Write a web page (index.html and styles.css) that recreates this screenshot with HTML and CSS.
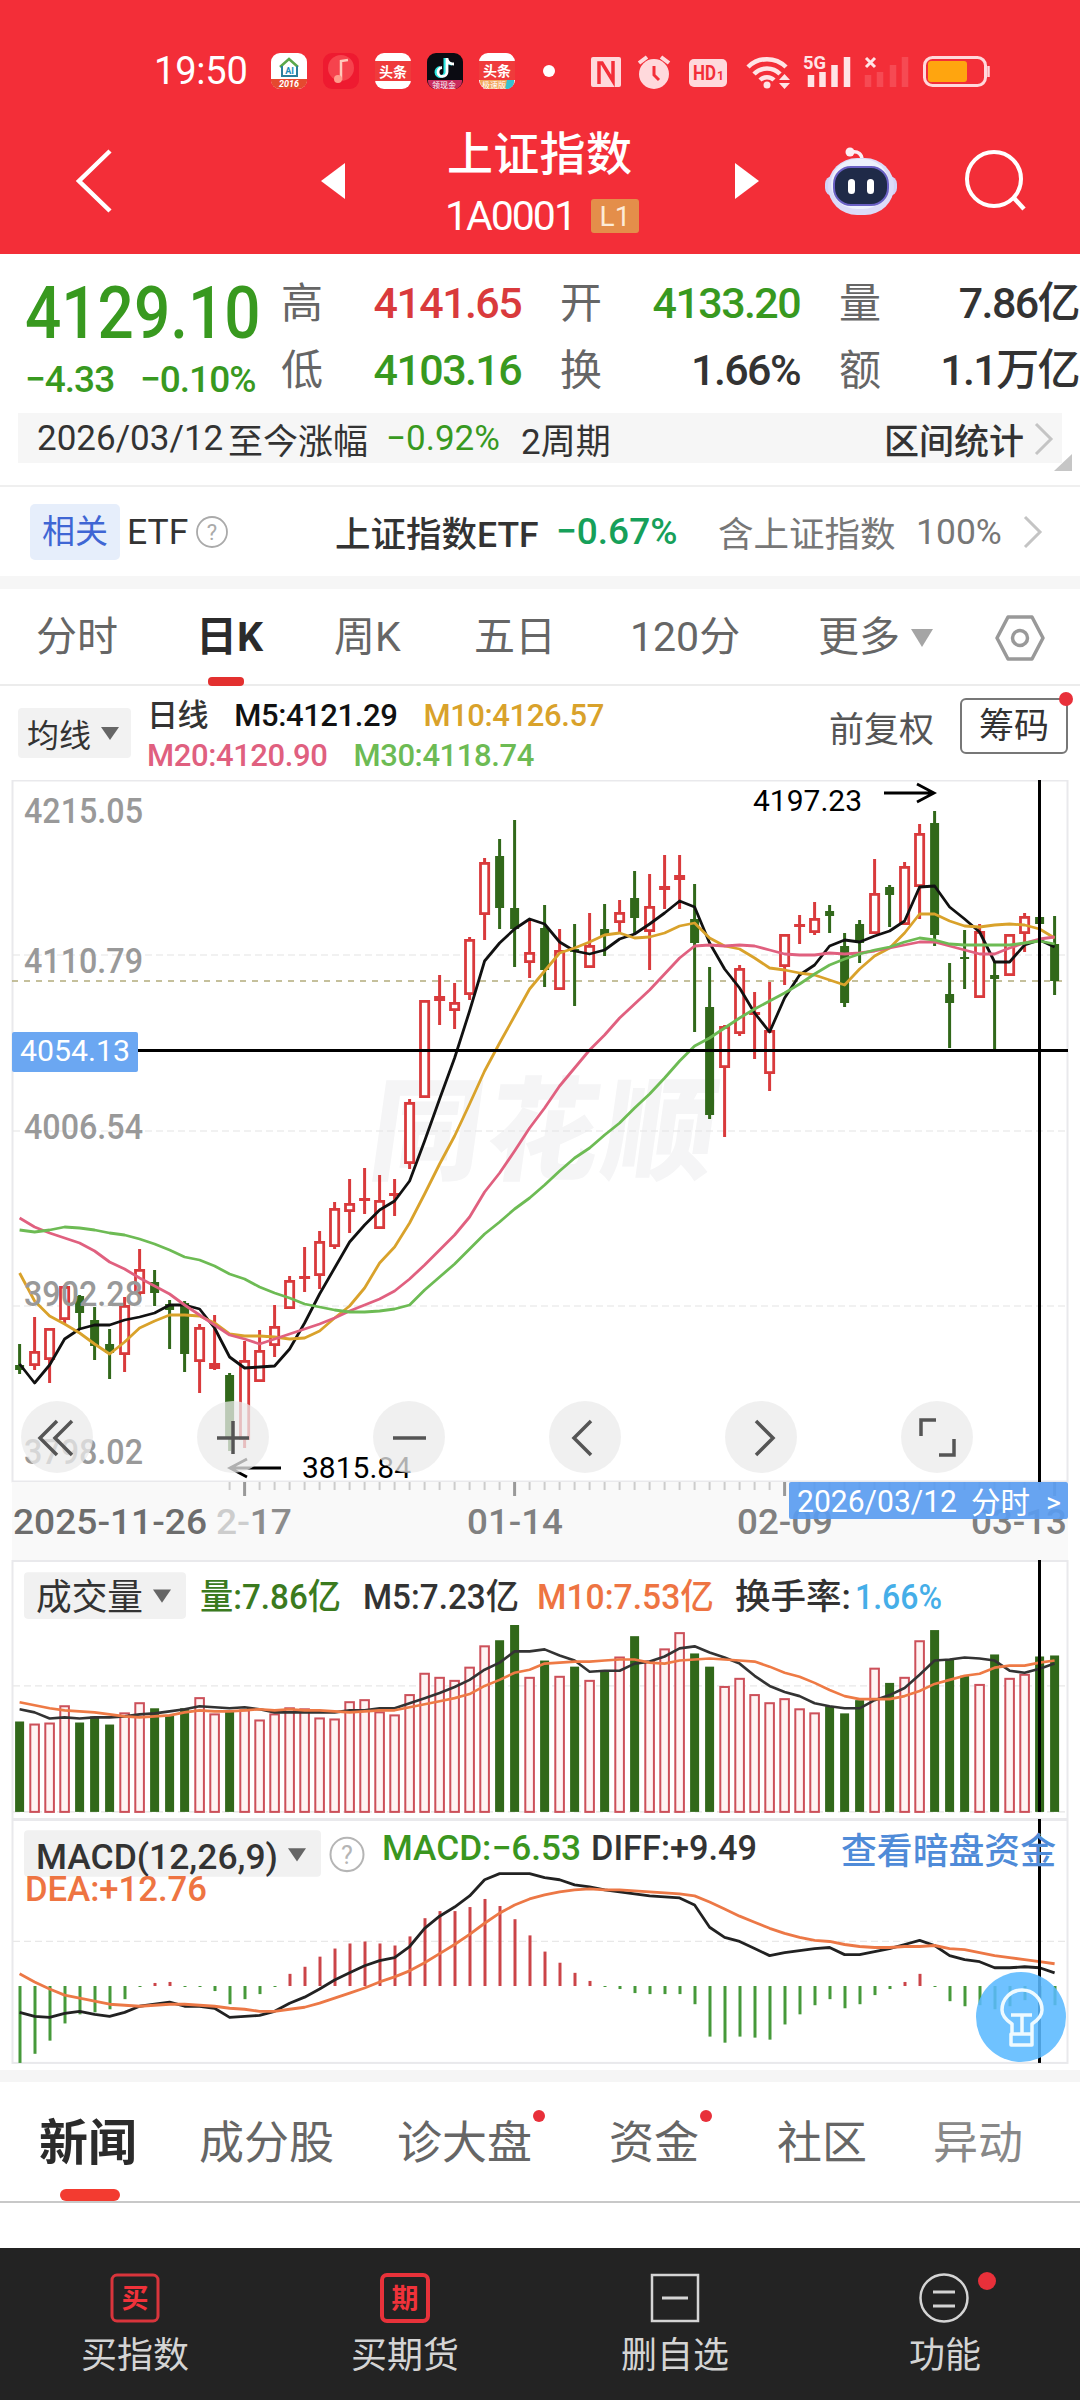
FILE: index.html
```html
<!DOCTYPE html>
<html lang="zh-CN">
<head>
    <meta charset="UTF-8">
    <meta name="viewport" content="width=device-width, initial-scale=1.0">
    <title>上证指数</title>
    <link rel="stylesheet" href="styles.css">
</head>
<body>
    <header class="top">
        <div class="status">
            <span class="time">19:50</span>
            <div class="apps">
                <svg width="36" height="36" viewBox="0 0 36 36">
                    <rect width="36" height="36" rx="9" fill="#fff"/>
                    <path d="M0 26h36a9 9 0 0 1-9 10H9A9 9 0 0 1 0 26z" fill="#e5492f"/>
                    <path d="M9 14l9-8 9 8" fill="none" stroke="#5aa84a" stroke-width="2.500"/>
                    <path d="M11 13v10h15V13" fill="none" stroke="#2a7f9c" stroke-width="2"/>
                    <text x="18.500" y="21" font-size="9" font-weight="700" fill="#1b8ab8" text-anchor="middle">AI</text>
                    <text x="18" y="34" font-size="9" font-weight="700" font-style="italic" fill="#fff" text-anchor="middle">2016</text>
                </svg>
                <svg width="36" height="36" viewBox="0 0 36 36">
                    <rect width="36" height="36" rx="9" fill="#ee1a30"/>
                    <circle cx="18" cy="15" r="13" fill="#f6434d"/>
                    <path d="M18 27V8l7-1" fill="none" stroke="#ffc9bb" stroke-width="2.500"/>
                    <circle cx="15" cy="26" r="4" fill="#ff9c8c"/>
                </svg>
                <svg width="36" height="36" viewBox="0 0 36 36">
                    <rect width="36" height="36" rx="9" fill="#fff"/>
                    <rect y="8" width="36" height="20" fill="#ef3b3b"/>
                    <text x="18" y="24" font-size="14" font-weight="700" fill="#fff" text-anchor="middle">头条</text>
                </svg>
                <svg width="36" height="36" viewBox="0 0 36 36">
                    <rect width="36" height="36" rx="9" fill="#0b0b12"/>
                    <path d="M18 5v14a4.500 4.500 0 1 1-5-4.500M18 6c1 4 3 5 7 5" fill="none" stroke="#27e5e0" stroke-width="3"/>
                    <path d="M20 5v14a4.500 4.500 0 1 1-5-4.500M20 6c1 4 3 5 7 5" fill="none" stroke="#fff" stroke-width="2.800"/>
                    <path d="M1 27h34a8 8 0 0 1-8 9H9a8 8 0 0 1-8-9z" fill="#c82a5c"/>
                    <text x="17" y="35" font-size="8" fill="#fff" text-anchor="middle">领现金</text>
                </svg>
                <svg width="36" height="36" viewBox="0 0 36 36">
                    <rect width="36" height="36" rx="9" fill="#fff"/>
                    <rect y="8" width="36" height="19" fill="#ef3b3b"/>
                    <path d="M1 27h34a8 8 0 0 1-8 9H9a8 8 0 0 1-8-9z" fill="#f2a65a"/>
                    <path d="M28 27h7a8 8 0 0 1-9 9z" fill="#35c2d0"/>
                    <text x="18" y="23" font-size="14" font-weight="700" fill="#fff" text-anchor="middle">头条</text>
                    <text x="15" y="35" font-size="8" fill="#fff" text-anchor="middle">极速版</text>
                </svg>
            </div>
            <i class="more-dot"></i>
            <svg class="sys" width="400" height="40" viewBox="590 50 400 40">
                <rect x="591" y="56" width="30" height="30" rx="2" fill="#ffd9dc"/>
                <path d="M599 83V62h3l11 18V60" fill="none" stroke="#f32e38" stroke-width="3.500"/>
                <circle cx="654" cy="73" r="15" fill="#ffd9dc"/>
                <path d="M639 62l8-6M669 62l-8-6" stroke="#ffd9dc" stroke-width="4"/>
                <path d="M654 65v9l5 5" fill="none" stroke="#f32e38" stroke-width="3"/>
                <rect x="689" y="58" width="38" height="28" rx="5" fill="#ffd9dc"/>
                <text x="693" y="79" font-size="20" font-weight="700" fill="#f32e38" textLength="23" lengthAdjust="spacingAndGlyphs">HD</text>
                <text x="717" y="79" font-size="12" font-weight="700" fill="#f32e38">1</text>
                <g fill="none" stroke="#ffe4e6" stroke-width="4.500">
                    <path d="M748 66a27 27 0 0 1 38 0"/>
                    <path d="M754 73a18 18 0 0 1 26 0"/>
                    <path d="M760 79a10 10 0 0 1 14 0"/>
                </g>
                <circle cx="767" cy="84" r="3.500" fill="#ffe4e6"/>
                <path d="M779 79l5.500-6 5.500 6zM779 82l5.500 6 5.500-6z" fill="#ffe4e6"/>
                <text x="803" y="68" font-size="19" font-weight="700" fill="#ffe4e6" textLength="23" lengthAdjust="spacingAndGlyphs">5G</text>
                <path d="M811 86V74M822.500 86V71M834.500 86V64M847 86V56" stroke="#ffe4e6" stroke-width="6.500"/>
                <path d="M866 57l9 9M875 57l-9 9" stroke="#ffe4e6" stroke-width="3"/>
                <path d="M868 86V74M880 86V71M893 86V64M905 86V56" stroke="#f64a53" stroke-width="6.500"/>
                <rect x="924.500" y="56.500" width="61" height="28" rx="8" fill="none" stroke="#ffd9dc" stroke-width="3"/>
                <rect x="928" y="60" width="39" height="21" rx="3" fill="#ffa50f"/>
                <path d="M988.500 65v11" stroke="#ffd9dc" stroke-width="2.500"/>
            </svg>
        </div>
        <div class="nav">
            <svg class="back" width="40" height="68" viewBox="0 0 40 68"><path d="M35 4L4 34l31 30" fill="none" stroke="#fff" stroke-width="4.500"/></svg>
            <svg class="prev" width="25" height="36" viewBox="0 0 25 36"><path d="M0 18L24 0v36z" fill="#fff"/></svg>
            <div class="title">
                <h1>上证指数</h1>
                <p><span class="code">1A0001</span><span class="level">L1</span></p>
            </div>
            <svg class="next" width="25" height="36" viewBox="0 0 25 36"><path d="M24 18L0 0v36z" fill="#fff"/></svg>
            <svg class="robot" width="74" height="70" viewBox="0 0 74 70">
                <path d="M38 14c0-6-4-9-10-8" fill="none" stroke="#fbeef6" stroke-width="3.500"/>
                <circle cx="26" cy="6" r="4.500" fill="#fdeff5"/>
                <rect x="1" y="30" width="72" height="20" rx="8" fill="#d3d2f6"/>
                <rect x="4" y="12" width="66" height="57" rx="29" fill="#dcdbf8"/>
                <rect x="7" y="13" width="58" height="50" rx="26" fill="#edf0fc"/>
                <rect x="10" y="21" width="54" height="38" rx="17" fill="#1f2a48" stroke="#6a60c4" stroke-width="2"/>
                <rect x="24" y="33" width="7" height="15" rx="3.500" fill="#fff"/>
                <rect x="43" y="33" width="7" height="15" rx="3.500" fill="#fff"/>
            </svg>
            <svg class="search" width="64" height="64" viewBox="0 0 64 64"><circle cx="29" cy="30" r="27" fill="none" stroke="#fff" stroke-width="4"/><path d="M48 48l11 12" stroke="#fff" stroke-width="4.500"/></svg>
        </div>
    </header>

    <section class="quote">
        <div class="last">
            <span class="price">4129.10</span>
            <p class="change"><span>−4.33</span><span>−0.10%</span></p>
        </div>
        <dl class="stats">
            <dt>高</dt><dd class="up">4141.65</dd>
            <dt>开</dt><dd class="down">4133.20</dd>
            <dt>量</dt><dd>7.86亿</dd>
            <dt>低</dt><dd class="down">4103.16</dd>
            <dt>换</dt><dd>1.66%</dd>
            <dt>额</dt><dd>1.1万亿</dd>
        </dl>
    </section>

    <div class="range">
        <span>2026/03/12</span>
        <span>至今涨幅</span>
        <span class="down">−0.92%</span>
        <span>2周期</span>
        <span class="strong">区间统计</span>
        <svg width="20" height="34" viewBox="0 0 20 34"><path d="M2 2l15 15L2 32" fill="none" stroke="#c4c4c4" stroke-width="3"/></svg>
        <i class="corner"></i>
    </div>

    <div class="etf">
        <span class="tag">相关</span>
        <span class="dark">ETF</span>
        <svg width="34" height="34" viewBox="0 0 34 34"><circle cx="17" cy="17" r="15" fill="none" stroke="#aaa" stroke-width="1.800"/><text x="17" y="25" font-size="22" fill="#aaa" text-anchor="middle">?</text></svg>
        <span class="dark strong">上证指数ETF</span>
        <span class="pct">−0.67%</span>
        <span>含上证指数</span>
        <span>100%</span>
        <svg width="20" height="34" viewBox="0 0 20 34"><path d="M2 2l15 15L2 32" fill="none" stroke="#c4c4c4" stroke-width="3"/></svg>
    </div>

    <nav class="periods">
        <a>分时</a>
        <a class="active">日K</a>
        <a>周K</a>
        <a>五日</a>
        <a>120分</a>
        <a>更多</a>
        <i class="caret big"></i>
        <svg width="50" height="48" viewBox="0 0 50 48"><path d="M13 3h24l11 21-11 21H13L2 24z" fill="none" stroke="#999" stroke-width="3.500" stroke-linejoin="round"/><circle cx="25" cy="24" r="7.500" fill="none" stroke="#999" stroke-width="3.500"/></svg>
    </nav>

    <div class="indicators">
        <div class="select">均线<i class="caret"></i></div>
        <div class="ma">
            <p><span>日线</span><span class="m5">M5:4121.29</span><span class="m10">M10:4126.57</span></p>
            <p><span class="m20">M20:4120.90</span><span class="m30">M30:4118.74</span></p>
        </div>
        <span class="adjust">前复权</span>
        <div class="chips">筹码<i class="badge"></i></div>
    </div>

    <main class="charts">
        <svg id="kline" width="1080" height="780" viewBox="0 779 1080 780"></svg>
        <div class="tools">
            <button><svg viewBox="0 0 72 72"><path d="M36 20L19 37l17 17M51 20L34 37l17 17"/></svg></button>
            <button><svg viewBox="0 0 72 72"><path d="M36 20v33M20 37h32"/></svg></button>
            <button><svg viewBox="0 0 72 72"><path d="M20 37h33"/></svg></button>
            <button><svg viewBox="0 0 72 72"><path d="M42 20L25 37l17 17"/></svg></button>
            <button><svg viewBox="0 0 72 72"><path d="M31 20l17 17-17 17"/></svg></button>
            <button><svg viewBox="0 0 72 72"><path d="M20 35V19h15M53 38v16H38"/></svg></button>
        </div>
        <svg id="volume" width="1080" height="259" viewBox="0 1559 1080 255" preserveAspectRatio="none"></svg>
        <svg id="macd" width="1080" height="251" viewBox="0 1814 1080 248" preserveAspectRatio="none"></svg>
        <div class="hint">
            <svg width="90" height="90" viewBox="0 0 90 90"><path d="M36 57v-5c-6-4-10-8-10-14a20 20 0 0 1 40 0c0 6-4 10-10 14v5M35 43h21M46 43v18M35 62h21v11H35zM36 56v6M56 56v6" fill="none" stroke="#eefaff" stroke-width="3.500" stroke-linejoin="round"/></svg>
        </div>
    </main>

    <nav class="topics">
        <a class="active">新闻</a>
        <a>成分股</a>
        <a>诊大盘<i class="badge"></i></a>
        <a>资金<i class="badge"></i></a>
        <a>社区</a>
        <a class="faded">异动</a>
    </nav>

    <footer class="actions">
        <a>
            <svg width="50" height="50" viewBox="0 0 50 50"><rect x="2" y="2" width="46" height="46" rx="5" fill="none" stroke="#d9353c" stroke-width="3"/><text x="25" y="35" font-size="27" font-weight="700" fill="#f0323a" text-anchor="middle">买</text></svg>
            买指数
        </a>
        <a>
            <svg width="50" height="50" viewBox="0 0 50 50"><rect x="2" y="2" width="46" height="46" rx="5" fill="none" stroke="#e8323a" stroke-width="4"/><text x="25" y="35" font-size="27" font-weight="700" fill="#f0323a" text-anchor="middle">期</text></svg>
            买期货
        </a>
        <a>
            <svg width="50" height="50" viewBox="0 0 50 50"><rect x="2" y="2" width="46" height="46" fill="none" stroke="#d4d4d4" stroke-width="2.500"/><path d="M12 25h26" stroke="#d4d4d4" stroke-width="3"/></svg>
            删自选
        </a>
        <a>
            <svg width="52" height="50" viewBox="0 0 52 50"><circle cx="25" cy="25" r="23.500" fill="none" stroke="#d4d4d4" stroke-width="2.500"/><path d="M14 19h22M14 33h22" stroke="#d4d4d4" stroke-width="3"/></svg>
            功能
            <i class="badge"></i>
        </a>
    </footer>

    <script>
        // One row per day: body top, body bottom, high, low, u(p) or d(own)
        const candles = [
            [1364,1369,1343,1373,"d"],[1350,1365,1316,1369,"u"],[1327,1359,1327,1382,"u"],[1285,1319,1284,1323,"u"],[1295,1312,1294,1327,"d"],
            [1319,1345,1306,1359,"d"],[1343,1352,1328,1378,"d"],[1304,1354,1296,1371,"u"],[1268,1293,1248,1300,"u"],[1281,1292,1269,1305,"d"],
            [1303,1309,1299,1348,"d"],[1302,1353,1300,1371,"d"],[1326,1361,1323,1392,"u"],[1362,1368,1314,1369,"u"],[1374,1437,1372,1450,"d"],
            [1359,1439,1340,1447,"u"],[1349,1381,1329,1381,"u"],[1325,1345,1304,1356,"u"],[1279,1308,1275,1308,"u"],[1275,1278,1246,1291,"u"],
            [1240,1275,1230,1288,"u"],[1207,1246,1201,1248,"u"],[1202,1211,1178,1232,"u"],[1197,1200,1167,1213,"u"],[1199,1228,1174,1228,"u"],
            [1192,1195,1178,1215,"u"],[1101,1163,1098,1168,"u"],[999,1097,999,1097,"u"],[995,1000,974,1024,"u"],[1001,1010,982,1028,"u"],
            [938,994,936,999,"u"],[861,914,857,939,"u"],[855,907,838,928,"d"],[907,928,819,966,"d"],[951,962,920,977,"u"],
            [927,969,904,986,"d"],[949,989,928,989,"u"],[948,951,923,1005,"d"],[944,967,912,967,"u"],[928,935,903,955,"d"],
            [911,922,899,932,"u"],[897,917,870,933,"d"],[905,931,873,969,"u"],[885,889,854,908,"u"],[874,879,854,908,"u"],
            [918,942,883,1031,"d"],[1006,1114,966,1118,"d"],[1025,1067,1024,1136,"u"],[967,1033,964,1035,"u"],[1011,1014,991,1058,"u"],
            [1029,1073,981,1090,"u"],[933,966,933,984,"u"],[923,926,914,943,"u"],[917,932,901,934,"u"],[910,915,904,932,"d"],
            [945,1002,932,1006,"d"],[923,942,919,962,"d"],[892,933,858,933,"u"],[886,894,884,926,"d"],[865,924,861,924,"u"],
            [832,886,823,918,"u"],[822,934,810,945,"d"],[993,1002,962,1047,"d"],[956,958,929,988,"d"],[930,997,923,997,"u"],
            [974,978,960,1051,"d"],[933,975,933,975,"u"],[915,933,912,951,"u"],[916,923,916,923,"d"],[943,980,915,994,"d"]
        ];
        const ma5 = [1363,1382,1364,1338,1328,1324,1324,1319,1316,1312,1304,1304,1308,1327,1356,1367,1366,1365,1348,1322,1293,1267,1241,1224,1209,1200,1180,1140,1098,1057,1010,960,942,928,918,923,941,950,953,949,938,933,923,912,900,906,942,968,987,1012,1031,997,974,964,945,939,941,935,930,920,886,885,906,918,931,961,961,944,939,946];
        const ma10 = [1272,1300,1315,1323,1332,1343,1353,1341,1327,1320,1314,1314,1315,1322,1333,1335,1335,1336,1338,1337,1330,1317,1305,1287,1262,1246,1222,1193,1163,1135,1103,1070,1042,1015,988,970,952,947,941,934,932,937,936,932,925,922,937,945,948,957,967,969,972,974,979,984,968,955,947,932,913,913,920,925,926,924,923,924,928,937];
        const ma20 = [1217,1226,1232,1237,1242,1250,1261,1268,1277,1285,1293,1304,1314,1324,1334,1338,1343,1338,1333,1328,1323,1317,1310,1304,1298,1290,1278,1264,1249,1234,1216,1191,1172,1150,1127,1107,1085,1067,1049,1034,1017,1003,989,973,957,945,944,945,944,945,949,953,954,954,952,953,952,950,947,944,941,941,945,949,953,953,947,942,938,936];
        const ma30 = [1229,1231,1229,1226,1227,1229,1232,1234,1238,1243,1249,1256,1259,1265,1273,1278,1286,1292,1297,1303,1306,1309,1311,1311,1310,1308,1304,1289,1276,1263,1248,1233,1221,1208,1197,1184,1170,1157,1147,1134,1122,1107,1093,1077,1060,1045,1037,1027,1017,1008,1000,992,983,973,964,958,953,949,946,941,937,939,943,944,944,944,944,942,940,943];
        const vol = [1718,1720,1719,1702,1719,1713,1721,1709,1699,1705,1712,1705,1694,1710,1708,1706,1716,1710,1704,1705,1714,1715,1698,1696,1708,1711,1691,1670,1674,1677,1664,1643,1638,1623,1674,1658,1673,1664,1677,1668,1654,1634,1658,1646,1630,1651,1664,1683,1675,1691,1699,1695,1705,1709,1703,1710,1697,1665,1680,1674,1638,1628,1657,1673,1681,1652,1675,1671,1654,1653];
        const vol5 = [1706,1709,1715,1714,1715,1714,1714,1713,1711,1710,1708,1706,1703,1704,1705,1704,1706,1709,1709,1709,1709,1709,1707,1707,1705,1705,1700,1695,1690,1684,1677,1667,1660,1649,1649,1647,1653,1658,1669,1668,1668,1661,1659,1654,1646,1644,1650,1655,1661,1673,1683,1689,1693,1700,1703,1705,1705,1697,1692,1685,1672,1658,1657,1655,1656,1658,1668,1670,1666,1661];
        const vol10 = [1699,1702,1705,1707,1708,1709,1711,1713,1714,1713,1712,1709,1707,1708,1708,1707,1706,1707,1706,1707,1707,1708,1709,1708,1707,1707,1704,1701,1698,1695,1691,1683,1677,1670,1667,1661,1660,1659,1659,1658,1657,1657,1660,1661,1658,1657,1656,1657,1658,1659,1664,1670,1674,1680,1687,1693,1696,1696,1696,1693,1688,1681,1677,1673,1671,1665,1663,1663,1660,1658];
        const bars = [2055,2046,2033,2016,2007,2005,2002,1992,1980,1976,1975,1980,1980,1984,1997,1992,1987,1980,1967,1960,1950,1942,1937,1935,1937,1939,1930,1912,1905,1905,1901,1893,1900,1913,1929,1945,1956,1966,1974,1980,1982,1986,1987,1987,1987,1997,2029,2035,2029,2030,2032,2017,2007,1998,1992,2001,1997,1988,1982,1975,1967,1980,1994,1999,1998,2002,1999,1993,1993,1998];
        const diff = [2005,2009,2010,2006,2004,2007,2009,2005,1999,1997,1995,1999,1999,2001,2010,2009,2008,2004,1996,1990,1982,1973,1966,1959,1954,1951,1940,1922,1910,1901,1890,1874,1868,1868,1868,1872,1874,1879,1881,1884,1886,1888,1890,1891,1892,1899,1921,1931,1935,1942,1949,1946,1944,1942,1941,1948,1948,1945,1942,1938,1934,1939,1949,1953,1955,1961,1961,1960,1961,1966];
        const dea = [1967,1975,1982,1988,1991,1994,1997,1998,1999,1998,1997,1997,1998,1999,2001,2002,2004,2004,2002,2000,1996,1991,1986,1981,1975,1970,1964,1956,1947,1938,1928,1917,1907,1899,1893,1889,1886,1884,1883,1884,1884,1885,1886,1887,1888,1890,1896,1903,1910,1916,1922,1927,1931,1934,1935,1938,1940,1941,1941,1940,1940,1939,1942,1943,1946,1949,1951,1953,1955,1957];

        const RED = "#d93a3c", GREEN = "#31681a";
        const x = i => 19.6 + 15 * i;

        function rect(x, y, w, h, attrs) {
            return `<rect x="${x}" y="${y}" width="${w}" height="${h}" ${attrs}/>`;
        }
        function line(x1, y1, x2, y2, color, width, extra) {
            return `<path d="M${x1} ${y1}L${x2} ${y2}" stroke="${color}" stroke-width="${width}" ${extra || ""}/>`;
        }
        function curve(values, color, width) {
            const points = values.map((v, i) => x(i) + "," + v).join(" ");
            return `<polyline points="${points}" fill="none" stroke="${color}" stroke-width="${width}" stroke-linejoin="round"/>`;
        }
        // left and right are the edges the label has to fill
        function label(left, right, y, text, size, color, extra) {
            return `<text x="${left}" y="${y}" font-size="${size}" fill="${color}" textLength="${right - left}" lengthAdjust="spacingAndGlyphs" ${extra || ""}>${text}</text>`;
        }
        function caret(x, y) {
            return `<path d="M${x} ${y}h18l-9 13z" fill="#666"/>`;
        }
        const MEDIUM = 'font-weight="500"';

        // K line
        let k = rect(12.5, 779.5, 1055, 701, 'fill="#fff" stroke="#e9e9ec" stroke-width="2"');
        k += '<text transform="translate(366 1170) skewX(-8)" font-size="112" font-weight="900" fill="#f5f5f6" textLength="345">同花顺</text>';
        [954, 1130, 1305].forEach(y => k += line(13, y, 1067, y, "#e4e4e4", 1.2, 'stroke-dasharray="7 4"'));
        k += line(12, 980, 1062, 980, "#b3ac7c", 1.6, 'stroke-dasharray="6 6"');
        candles.forEach(([top, bottom, high, low, dir], i) => {
            const cx = x(i);
            if (dir === "d") {
                k += line(cx, high, cx, low, GREEN, 3) + rect(cx - 4.5, top, 9, bottom - top, `fill="${GREEN}"`);
            } else {
                k += line(cx, high, cx, low, RED, 3);
                k += bottom - top < 7
                    ? rect(cx - 5.5, top, 11, bottom - top, `fill="${RED}"`)
                    : rect(cx - 4.1, top + 1.4, 8.2, bottom - top - 2.8, `fill="#fff" stroke="${RED}" stroke-width="2.8"`);
            }
        });
        k += curve(ma5, "#111", 2.8) + curve(ma10, "#d9a22b", 2.8) + curve(ma20, "#e0607f", 2.8) + curve(ma30, "#6dbb54", 2.8);
        [["4215.05", 822], ["4110.79", 972], ["4006.54", 1138], ["3902.28", 1305], ["3798.02", 1463]].forEach(([t, y]) => {
            k += label(24, 143, y, t, 35, "#999", MEDIUM);
        });
        k += label(753, 862, 810, "4197.23", 30, "#000") + label(302, 411, 1477, "3815.84", 30, "#000");
        k += '<path d="M884 792h50M917 783l17 9-17 9M281 1467h-51M247 1458l-17 9 17 9" fill="none" stroke="#000" stroke-width="2.800"/>';

        // date axis
        k += rect(12, 1481, 1056, 78, 'fill="#f9f9f9"');
        for (let i = 14; i < 70; i++) {
            const major = (i - 15) % 18 === 0;
            k += line(x(i), 1481, x(i), major ? 1495 : 1489, major ? "#999" : "#ccc", major ? 3 : 2);
        }
        k += label(216, 292, 1533, "2-17", 35, "#8c8c8c", MEDIUM) + label(467, 563, 1533, "01-14", 35, "#808080", MEDIUM);
        k += label(737, 833, 1533, "02-09", 35, "#808080", MEDIUM) + label(971, 1067, 1533, "03-13", 35, "#808080", MEDIUM);
        k += '<rect x="206" y="1500" width="42" height="40" fill="#f9f9f9" opacity="0.6"/>';
        k += label(13, 207, 1533, "2025-11-26", 35, "#6d6d6d", MEDIUM);

        // crosshair
        k += line(12, 1049.5, 1068, 1049.5, "#000", 3) + line(1039.5, 779, 1039.5, 1481, "#000", 3);
        k += rect(12, 1031, 126, 40, 'rx="2" fill="#6ba7f2"') + label(20, 130, 1060, "4054.13", 30, "#fff");
        k += rect(789, 1481, 279, 37, 'rx="2" fill="#5a9cf0" opacity="0.92"');
        k += label(797, 957, 1511, "2026/03/12", 32, "#fff") + label(971, 1030, 1512, "分时", 30, "#fff") + label(1046, 1061, 1511, "&gt;", 28, "#fff");
        document.getElementById("kline").innerHTML = k;

        // volume
        let v = rect(12.5, 1560, 1055, 254, 'fill="#fff" stroke="#e9e9ec" stroke-width="2"');
        v += line(13, 1683, 1067, 1683, "#e8e8e8", 1.2, 'stroke-dasharray="7 4"') + line(13, 1807, 1067, 1807, "#e4e4e4", 1.2, 'stroke-dasharray="7 4"');
        vol.forEach((top, i) => {
            v += candles[i][4] === "d"
                ? rect(x(i) - 4.5, top, 9, 1807 - top, `fill="${GREEN}"`)
                : rect(x(i) - 4.3, top + 1, 8.6, 1806 - top, 'fill="#fff4f4" stroke="#cc505a" stroke-width="2"');
        });
        v += curve(vol5, "#333", 2.6) + curve(vol10, "#ee7a45", 2.6);
        v += line(1039.5, 1559, 1039.5, 1807, "#000", 3);
        v += rect(24, 1571, 162, 46, 'rx="4" fill="#f1f1f1"') + label(36, 143, 1608, "成交量", 36, "#333") + caret(153, 1588);
        v += label(200, 341, 1607, "量:7.86亿", 35, "#3b7a1e", MEDIUM) + label(363, 519, 1607, "M5:7.23亿", 35, "#333", MEDIUM);
        v += label(537, 714, 1607, "M10:7.53亿", 35, "#ee7442", MEDIUM) + label(735, 851, 1607, "换手率:", 35, "#333", MEDIUM) + label(855, 942, 1607, "1.66%", 35, "#45aee8", MEDIUM);
        document.getElementById("volume").innerHTML = v;

        // MACD
        let m = rect(12.5, 1815, 1055, 240, 'fill="#fff" stroke="#e9e9ec" stroke-width="2"');
        m += line(13, 1935, 1067, 1935, "#e8e8e8", 1.2, 'stroke-dasharray="7 4"');
        bars.forEach((tip, i) => {
            m += tip < 1979 ? line(x(i) + 0.4, 1979, x(i) + 0.4, tip, "#cb4448", 3) : line(x(i) + 0.4, 1979, x(i) + 0.4, tip, "#46993a", 3);
        });
        m += curve(diff, "#222", 2.8) + curve(dea, "#ec7846", 2.8);
        m += rect(24, 1825, 297, 46, 'rx="4" fill="#f1f1f1"') + label(36, 278, 1863, "MACD(12,26,9)", 35, "#333", MEDIUM) + caret(288, 1843);
        m += '<circle cx="347" cy="1849" r="16.500" fill="none" stroke="#b5b5b5" stroke-width="2"/><text x="347" y="1858" font-size="25" fill="#b5b5b5" text-anchor="middle">?</text>';
        m += label(382, 581, 1855, "MACD:−6.53", 35, "#3a961f", MEDIUM) + label(591, 757, 1855, "DIFF:+9.49", 35, "#333", MEDIUM);
        m += label(25, 207, 1895, "DEA:+12.76", 35, "#ee7442", MEDIUM);
        m += line(1039.5, 1814, 1039.5, 2055, "#000", 3);
        m += label(841, 1056, 1858, "查看暗盘资金", 36, "#4f8bd8", MEDIUM);
        document.getElementById("macd").innerHTML = m;
    </script>
</body>
</html>
```
FILE: styles.css
```css
* {
    margin: 0;
    padding: 0;
    box-sizing: border-box;
}

body {
    width: 1080px;
    height: 2400px;
    overflow: hidden;
    background-color: #fff;
    color: #333;
    font-family: Roboto, "Noto Sans CJK SC", sans-serif;
}

svg {
    display: block;
    flex-shrink: 0;
}

span,
a,
dt,
dd {
    white-space: nowrap;
}

.up {
    color: #d93a3c;
}

.down {
    color: #38991f;
}

.strong {
    font-weight: 500;
}

/* Header */
.top {
    height: 254px;
    padding-top: 46px;
    background-color: #f32e38;
    color: #fff;
}

.status {
    display: flex;
    align-items: center;
    height: 50px;
    padding-left: 154px;
}

.time {
    width: 117px;
    font-size: 38px;
    letter-spacing: -0.2px;
}

.apps {
    display: flex;
    gap: 16px;
}

.more-dot {
    width: 12px;
    height: 12px;
    margin: 0 35px 0 28px;
    border-radius: 50%;
    background-color: #fff;
}

.nav {
    display: grid;
    grid-template-columns: 246px 119px 295px 89px 141px 64px;
    align-items: center;
    height: 158px;
    padding: 12px 51px 0 75px;
}

.title {
    padding-left: 7px;
}

.title h1 {
    height: 64px;
    font-size: 46px;
    font-weight: 500;
    line-height: 56px;
    letter-spacing: 0.3px;
}

.title p {
    display: flex;
    align-items: center;
    height: 46px;
    margin-left: -2px;
    padding-top: 6px;
}

.code {
    width: 146px;
    font-size: 41px;
    letter-spacing: -2px;
}

.level {
    width: 48px;
    height: 34px;
    border-radius: 3px;
    background-color: #e48e4a;
    color: #fdebd8;
    font-size: 28px;
    line-height: 35px;
    text-align: center;
}

/* Quote */
.quote {
    display: flex;
    height: 159px;
    padding-top: 16px;
}

.last {
    width: 281px;
    padding-left: 25px;
    color: #38991f;
}

.price {
    display: block;
    width: 270px;
    height: 80px;
    font-size: 73px;
    font-weight: 500;
    line-height: 87px;
    transform: scaleX(0.875);
    transform-origin: left;
}

.change {
    display: grid;
    grid-template-columns: 115px 120px;
    font-size: 37px;
    font-weight: 500;
    line-height: 60px;
    letter-spacing: -1px;
}

.stats {
    display: grid;
    grid-template-columns: 80px 160px 119px 160px 119px 160px;
    grid-template-rows: 67px 65px;
    font-size: 43px;
    line-height: 67px;
}

.stats dt {
    color: #666;
    font-size: 42px;
}

.stats dt:nth-of-type(3n + 2),
.stats dt:nth-of-type(3n) {
    padding-left: 39px;
}

.stats dd {
    font-weight: 500;
    letter-spacing: -1.6px;
    text-align: right;
}

/* Range summary */
.range {
    position: relative;
    display: grid;
    grid-template-columns: 191px 158px 135px 363px 150px 20px;
    align-items: center;
    height: 50px;
    margin: 0 18px;
    padding-left: 19px;
    background-color: #f6f6f6;
    font-size: 35px;
}

.corner {
    position: absolute;
    right: -10px;
    bottom: -8px;
    border-left: 18px solid transparent;
    border-bottom: 17px solid #c6c6c6;
}

/* Related ETF */
.etf {
    display: grid;
    grid-template-columns: 97px 68px 140px 221px 162px 198px 107px 20px;
    align-items: center;
    height: 104px;
    margin-top: 22px;
    padding-left: 30px;
    border-top: 2px solid #efefef;
    border-bottom: 13px solid #f6f6f6;
    color: #777;
    font-size: 35.500px;
}

.dark {
    color: #333;
}

.pct {
    color: #16a05a;
    font-size: 37px;
    font-weight: 500;
}

.tag {
    width: 90px;
    height: 56px;
    border-radius: 5px;
    background-color: #e6eefb;
    color: #3f66d4;
    font-size: 33px;
    line-height: 56px;
    text-align: center;
}

/* Period tabs */
.periods {
    display: grid;
    grid-template-columns: 160px 138px 140px 156px 188px 93px 84px 50px;
    align-items: center;
    height: 97px;
    padding-left: 36px;
    border-bottom: 2px solid #ececec;
    color: #666;
    font-size: 41px;
}

.periods a {
    position: relative;
    line-height: 97px;
}

.periods .active {
    color: #2b2b2b;
    font-weight: 700;
}

.periods .active::after {
    content: "";
    position: absolute;
    left: 12px;
    bottom: 0;
    width: 36px;
    height: 9px;
    border-radius: 4px;
    background-color: #e3302f;
}

.caret {
    width: 0;
    border-left: 9px solid transparent;
    border-right: 9px solid transparent;
    border-top: 13px solid #666;
}

.caret.big {
    border-left-width: 11px;
    border-right-width: 11px;
    border-top: 18px solid #a5a5a5;
}

/* Moving averages */
.indicators {
    display: flex;
    align-items: center;
    height: 94px;
    padding-left: 18px;
}

.select {
    display: flex;
    flex-shrink: 0;
    align-items: center;
    gap: 10px;
    width: 113px;
    height: 50px;
    padding-left: 9px;
    border-radius: 4px;
    background-color: #f2f2f2;
    font-size: 32px;
}

.ma {
    flex-shrink: 0;
    width: 698px;
    padding: 5px 0 0 16px;
    font-size: 31px;
    font-weight: 500;
    line-height: 40px;
    letter-spacing: -0.4px;
}

.ma p {
    display: flex;
    gap: 26px;
    height: 40px;
}

.m5 {
    color: #111;
}

.m10 {
    color: #d9a22b;
}

.m20 {
    color: #e0607f;
}

.m30 {
    color: #6dbb54;
}

.adjust {
    flex-shrink: 0;
    width: 131px;
    margin-top: -13px;
    color: #555;
    font-size: 35px;
}

.chips {
    position: relative;
    flex-shrink: 0;
    width: 108px;
    height: 56px;
    margin-top: -14px;
    border: 2px solid #777;
    border-radius: 6px;
    font-size: 35px;
    line-height: 54px;
    text-align: center;
}

.badge {
    position: absolute;
    width: 14px;
    height: 14px;
    border-radius: 50%;
    background-color: #e8303a;
}

.chips .badge {
    top: -8px;
    right: -7px;
}

/* Charts */
.charts {
    position: relative;
    border-bottom: 12px solid #f5f5f5;
}

.tools {
    position: absolute;
    top: 621px;
    left: 21px;
    display: flex;
    gap: 104px;
}

.tools button {
    width: 72px;
    height: 72px;
    border: none;
    border-radius: 50%;
    background-color: rgba(235, 235, 235, 0.75);
}

.tools path {
    fill: none;
    stroke: #555;
    stroke-width: 3.500;
}

.hint {
    position: absolute;
    right: 14px;
    bottom: 8px;
    width: 90px;
    height: 90px;
    border-radius: 50%;
    background-color: rgba(90, 185, 255, 0.87);
}

/* Topic tabs */
.topics {
    display: grid;
    grid-template-columns: 160px 198px 212px 168px 156px 100px;
    height: 121px;
    padding-left: 39px;
    border-bottom: 2px solid #c8c8c8;
    color: #666;
    font-size: 45px;
    line-height: 123px;
}

.topics a {
    position: relative;
    justify-self: start;
    height: 119px;
}

.topics .active {
    color: #2b2b2b;
    font-size: 49px;
    font-weight: 700;
}

.topics .active::after {
    content: "";
    position: absolute;
    left: 21px;
    bottom: 0;
    width: 60px;
    height: 12px;
    border-radius: 6px;
    background-color: #f33b30;
}

.topics .badge {
    top: 28px;
    right: -13px;
    width: 12px;
    height: 12px;
}

.topics .faded {
    color: #888;
}

/* Bottom actions */
.actions {
    display: flex;
    height: 154px;
    margin-top: 45px;
    background-color: #232323;
    color: #d4d4d4;
    font-size: 36px;
}

.actions a {
    position: relative;
    display: flex;
    flex: 1;
    flex-direction: column;
    align-items: center;
    padding-top: 25px;
    line-height: 66px;
}

.actions .badge {
    top: 24px;
    right: 84px;
    width: 18px;
    height: 18px;
}
```
